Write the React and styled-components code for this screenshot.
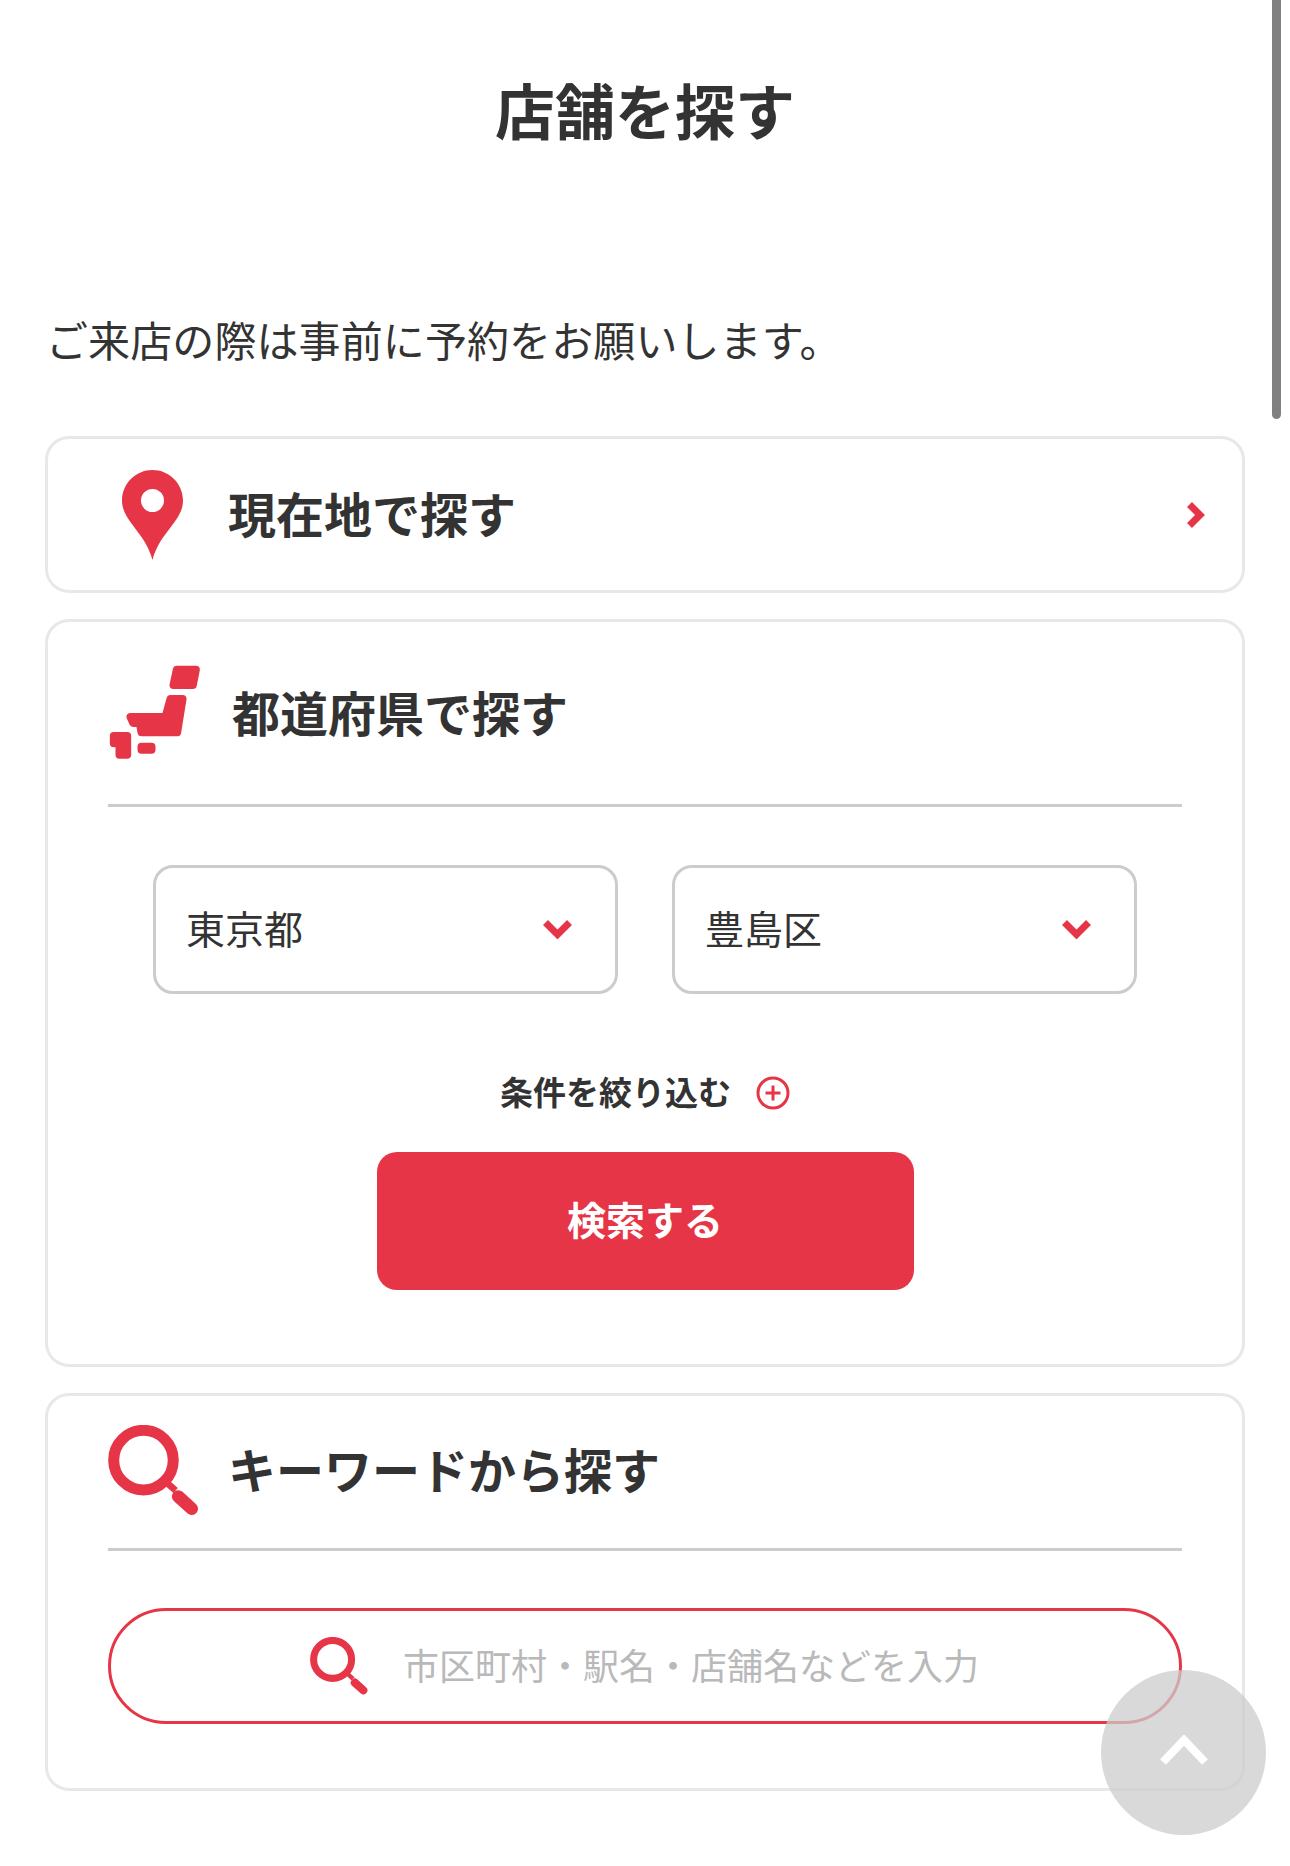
import styled, { createGlobalStyle } from 'styled-components';

const RED = '#e63546';

const GlobalStyle = createGlobalStyle`
    html, body {
        margin:0;
        padding:0;
        background:#fff;
    }
    body {
        font-family:"Noto Sans CJK JP","Noto Sans",sans-serif;
        color:#333;
    }
`
const Page = styled.div`
    position:relative;
    width:1290px;
    height:1866px;
    overflow:hidden;
    box-sizing:border-box;
    padding:0 45px;
`
const Title = styled.h1`
    margin:0;
    padding-top:74px;
    font-size:60px;
    line-height:70px;
    font-weight:700;
    text-align:center;
`
const Lead = styled.p`
    margin:0 0 0 1px;
    padding-top:165px;
    font-size:42px;
    line-height:60px;
    font-weight:400;
    letter-spacing:0.1px;
`
const Stack = styled.div`
    display:flex;
    flex-direction:column;
    gap:26px;
    margin-top:67px;
`
const Card = styled.section`
    box-sizing:border-box;
    background:#fff;
    border:3px solid #e8e8e8;
    border-radius:24px;
    padding:${p => p.$padding};
`
const NearbyRow = styled.div`
    display:flex;
    align-items:center;
    height:151px;
    padding-left:74px;
    padding-right:37px;
`
const Label = styled.h2`
    margin:0;
    padding-bottom:5px;
    font-size:48px;
    line-height:60px;
    font-weight:700;
    margin-left:${p => p.$gap}px;
    flex:1;
`
const Head = styled.div`
    display:flex;
    align-items:center;
    height:${p => p.$height}px;
    padding-bottom:${p => p.$bottom || 0}px;
    border-bottom:3px solid #ccc;
`
const SelectRow = styled.div`
    display:flex;
    justify-content:center;
    gap:54px;
    margin-top:58px;
`
const Select = styled.div`
    box-sizing:border-box;
    width:465px;
    height:129px;
    border:3px solid #ccc;
    border-radius:20px;
    display:flex;
    align-items:center;
    justify-content:space-between;
    padding:0 43px 6px 30px;
    font-size:39px;
    svg{
        margin-top:6px;
    }
`
const Refine = styled.div`
    display:flex;
    justify-content:center;
    align-items:center;
    gap:25px;
    margin-top:75px;
    font-size:33px;
    line-height:44px;
    font-weight:700;
    svg{
        margin-top:4px;
    }
`
const SearchButton = styled.button`
    display:block;
    width:537px;
    height:138px;
    margin:39px auto 0;
    padding:0 0 6px;
    border:0;
    border-radius:20px;
    background:${RED};
    color:#fff;
    font-family:inherit;
    font-size:39px;
    font-weight:700;
`
const KeywordBox = styled.label`
    box-sizing:border-box;
    height:116px;
    margin-top:57px;
    border:3px solid ${RED};
    border-radius:58px;
    display:flex;
    align-items:center;
    padding-left:199px;
    gap:35px;
`
const KeywordInput = styled.input`
    flex:1;
    min-width:0;
    padding:0 0 4px;
    border:0;
    outline:0;
    background:transparent;
    font-family:inherit;
    font-size:36px;
    color:#333;
    &::placeholder{
        color:#b9b9b9;
        opacity:1;
    }
`
const ScrollThumb = styled.div`
    position:absolute;
    top:-10px;
    left:1272px;
    width:9px;
    height:429px;
    border-radius:5px;
    background:#808080;
`
const BackToTop = styled.button`
    position:absolute;
    left:1101px;
    top:1670px;
    width:165px;
    height:165px;
    padding:0;
    border:0;
    border-radius:50%;
    background:rgba(204,204,204,0.75);
    display:flex;
    align-items:center;
    justify-content:center;
    svg{
        margin-top:-5px;
    }
`
const IconBox = styled.svg`
    display:block;
    flex:none;
`

function PinIcon() {
    return (
        <IconBox width="61" height="90" viewBox="0 0 61 90">
            <path
                fill={RED}
                fillRule="evenodd"
                d="M30.5 0C47.3 0 61 13.7 61 30.5C61 51 38 62 30.5 90C23 62 0 51 0 30.5C0 13.7 13.7 0 30.5 0ZM30.5 19A11.5 11.5 0 1 0 30.5 42A11.5 11.5 0 1 0 30.5 19Z"
            />
        </IconBox>
    )
}

function JapanIcon() {
    return (
        <IconBox width="97" height="100" viewBox="53 640 290 300">
            <g fill={RED} stroke={RED} strokeLinejoin="round">
                <path strokeWidth="24" d="M259 660H316L307 706H249Z" />
                <path strokeWidth="24" d="M240 748H276L260 848H153L148 820H128L120 802H225Z" />
                <rect x="153" y="891" width="30" height="9" strokeWidth="24" />
                <path strokeWidth="24" d="M70 859H110V915H87V881H70Z" />
            </g>
        </IconBox>
    )
}

function SearchIcon({ size }) {
    return (
        <IconBox width={size} height={size} viewBox="54 78 272 272">
            <circle cx="160" cy="183" r="89" fill="none" stroke={RED} strokeWidth="33" />
            <path d="M229 250L256 274" stroke={RED} strokeWidth="20" fill="none" />
            <path d="M264 292L304 328" stroke={RED} strokeWidth="38" strokeLinecap="round" fill="none" />
        </IconBox>
    )
}

function Chevron({ width, height, d, strokeWidth = 7, color = RED }) {
    return (
        <IconBox width={width} height={height} viewBox={`0 0 ${width} ${height}`}>
            <path d={d} fill="none" stroke={color} strokeWidth={strokeWidth} />
        </IconBox>
    )
}

function PlusCircle() {
    return (
        <IconBox width="34" height="34" viewBox="0 0 34 34">
            <circle cx="17" cy="17" r="15" fill="none" stroke={RED} strokeWidth="3" />
            <path d="M17 9.5V24.5M9.5 17H24.5" fill="none" stroke={RED} strokeWidth="3" />
        </IconBox>
    )
}

function App() {
    return (
        <>
            <GlobalStyle />
            <Page>
                <Title>店舗を探す</Title>
                <Lead>ご来店の際は事前に予約をお願いします。</Lead>
                <Stack>
                    <Card>
                        <NearbyRow>
                            <PinIcon />
                            <Label $gap={45}>現在地で探す</Label>
                            <Chevron width={18} height={26} d="M2.5 2.5L13 13L2.5 23.5" />
                        </NearbyRow>
                    </Card>
                    <Card $padding="0 60px 74px 60px">
                        <Head $height={182}>
                            <JapanIcon />
                            <Label $gap={27}>都道府県で探す</Label>
                        </Head>
                        <SelectRow>
                            <Select>
                                東京都
                                <Chevron width={29} height={19} d="M2.5 2.5L14.5 14.5L26.5 2.5" />
                            </Select>
                            <Select>
                                豊島区
                                <Chevron width={29} height={19} d="M2.5 2.5L14.5 14.5L26.5 2.5" />
                            </Select>
                        </SelectRow>
                        <Refine>
                            条件を絞り込む
                            <PlusCircle />
                        </Refine>
                        <SearchButton>検索する</SearchButton>
                    </Card>
                    <Card $padding="0 60px 64px 60px">
                        <Head $height={148} $bottom={4}>
                            <SearchIcon size={91} />
                            <Label $gap={29}>キーワードから探す</Label>
                        </Head>
                        <KeywordBox>
                            <SearchIcon size={58} />
                            <KeywordInput placeholder="市区町村・駅名・店舗名などを入力" />
                        </KeywordBox>
                    </Card>
                </Stack>
                <ScrollThumb />
                <BackToTop aria-label="ページトップへ">
                    <Chevron width={48} height={30} strokeWidth={8} color="#fff" d="M3 27L24 5L45 27" />
                </BackToTop>
            </Page>
        </>
    )
}

export default App
